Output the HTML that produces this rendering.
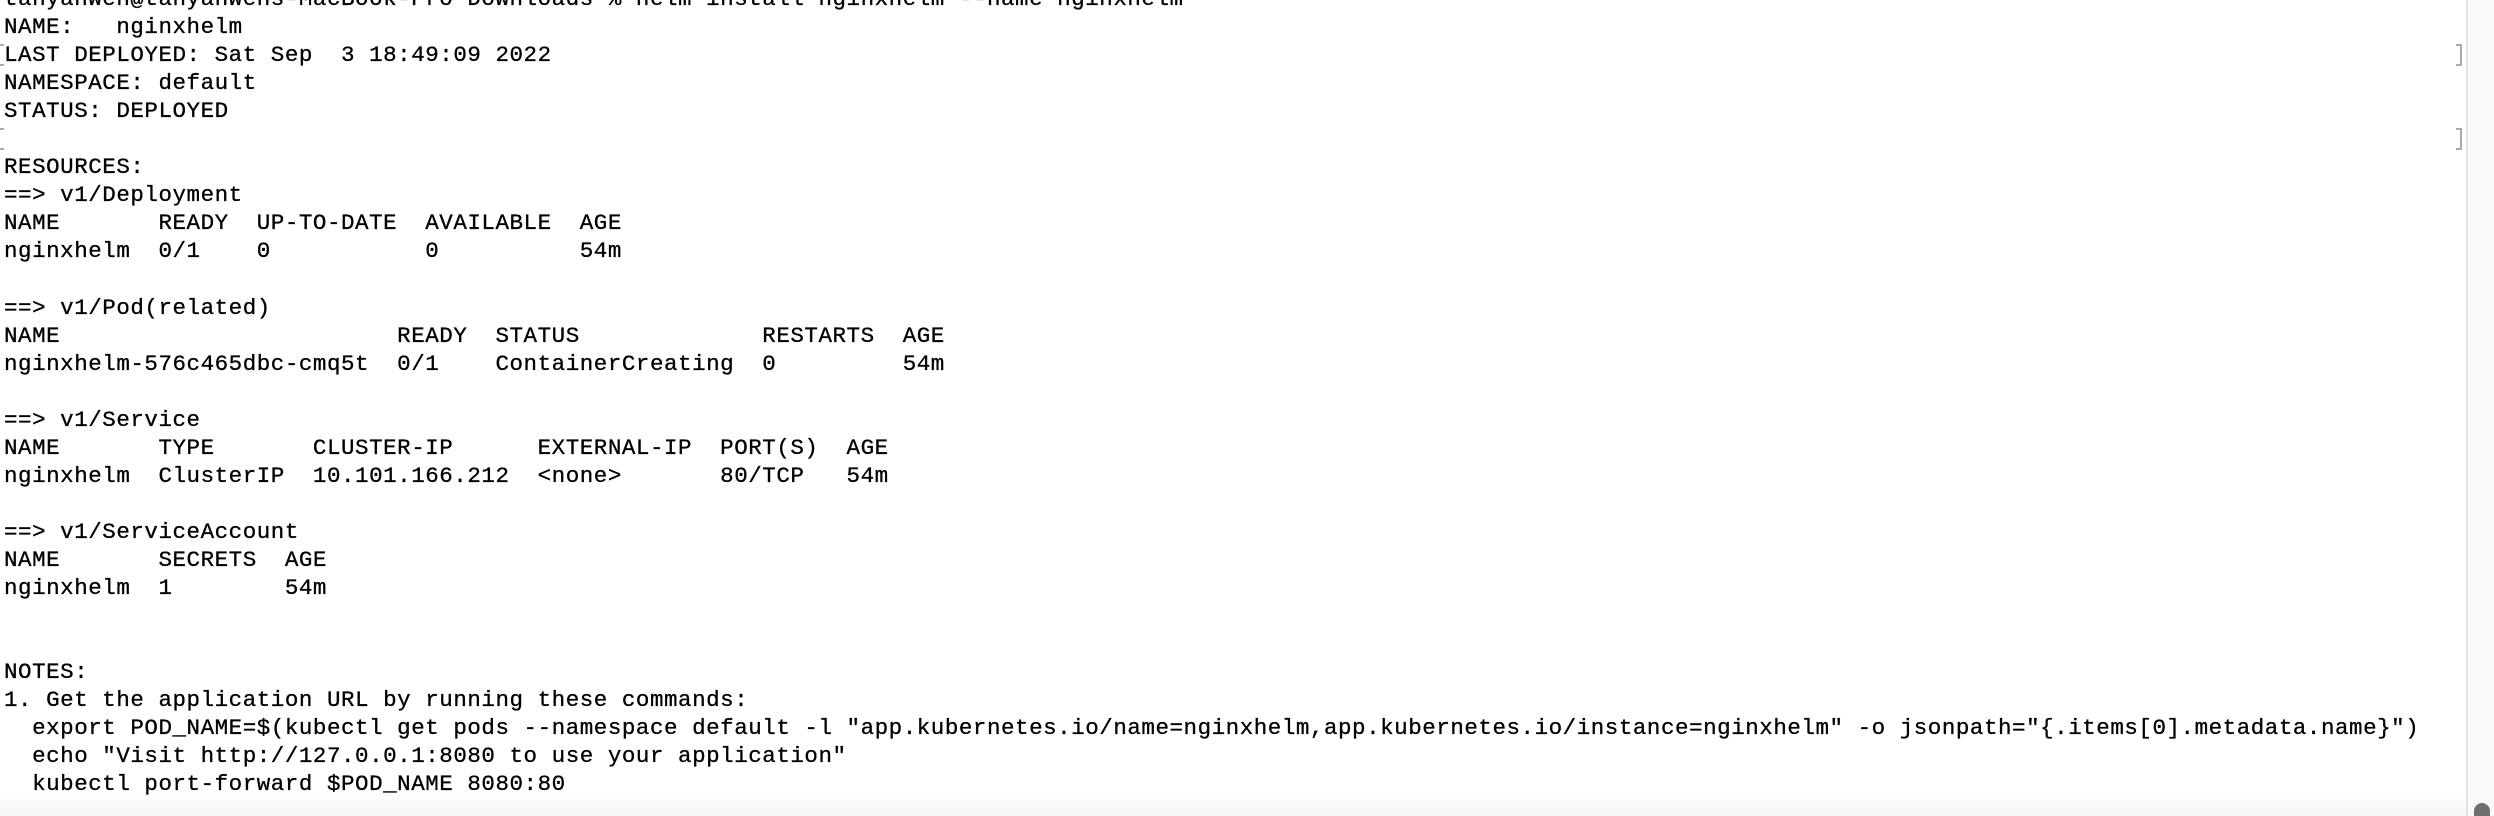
<!DOCTYPE html>
<html><head><meta charset="utf-8"><style>
html,body{margin:0;padding:0;background:#fff;width:2494px;height:816px;overflow:hidden;position:relative}
pre{position:absolute;left:4px;top:-15px;margin:0;font-family:"Liberation Mono","DejaVu Sans Mono",monospace;font-size:22.5px;letter-spacing:0.54px;line-height:28.04px;color:#000;white-space:pre;-webkit-text-stroke:0.3px #000}
.sb{position:absolute;left:2466px;top:0;width:28px;height:816px;background:#f9f9f9;border-left:2px solid #e4e4e4;box-sizing:border-box}
.th{position:absolute;left:2474px;top:803px;width:16px;height:26px;border-radius:8px;background:#6e6e6e}
.bot{position:absolute;left:0;top:792px;width:2466px;height:24px;background:linear-gradient(#fff,#f4f4f4)}
.bl{position:absolute;width:4px;height:18px;border:2px solid #aaa}
</style></head><body>
<div class="bot"></div>
<pre>tanyanwen@tanyanwens-MacBook-Pro Downloads % helm install nginxhelm --name nginxhelm
NAME:   nginxhelm
LAST DEPLOYED: Sat Sep  3 18:49:09 2022
NAMESPACE: default
STATUS: DEPLOYED

RESOURCES:
==&gt; v1/Deployment
NAME       READY  UP-TO-DATE  AVAILABLE  AGE
nginxhelm  0/1    0           0          54m

==&gt; v1/Pod(related)
NAME                        READY  STATUS             RESTARTS  AGE
nginxhelm-576c465dbc-cmq5t  0/1    ContainerCreating  0         54m

==&gt; v1/Service
NAME       TYPE       CLUSTER-IP      EXTERNAL-IP  PORT(S)  AGE
nginxhelm  ClusterIP  10.101.166.212  &lt;none&gt;       80/TCP   54m

==&gt; v1/ServiceAccount
NAME       SECRETS  AGE
nginxhelm  1        54m


NOTES:
1. Get the application URL by running these commands:
  export POD_NAME=$(kubectl get pods --namespace default -l "app.kubernetes.io/name=nginxhelm,app.kubernetes.io/instance=nginxhelm" -o jsonpath="{.items[0].metadata.name}")
  echo "Visit http://127.0.0.1:8080 to use your application"
  kubectl port-forward $POD_NAME 8080:80</pre>
<div class="bl" style="left:-2px;top:44px;border-right:none"></div>
<div class="bl" style="left:-2px;top:128px;border-right:none"></div>
<div class="bl" style="left:2456px;top:44px;border-left:none"></div>
<div class="bl" style="left:2456px;top:128px;border-left:none"></div>
<div class="sb"></div>
<div class="th"></div>
</body></html>
